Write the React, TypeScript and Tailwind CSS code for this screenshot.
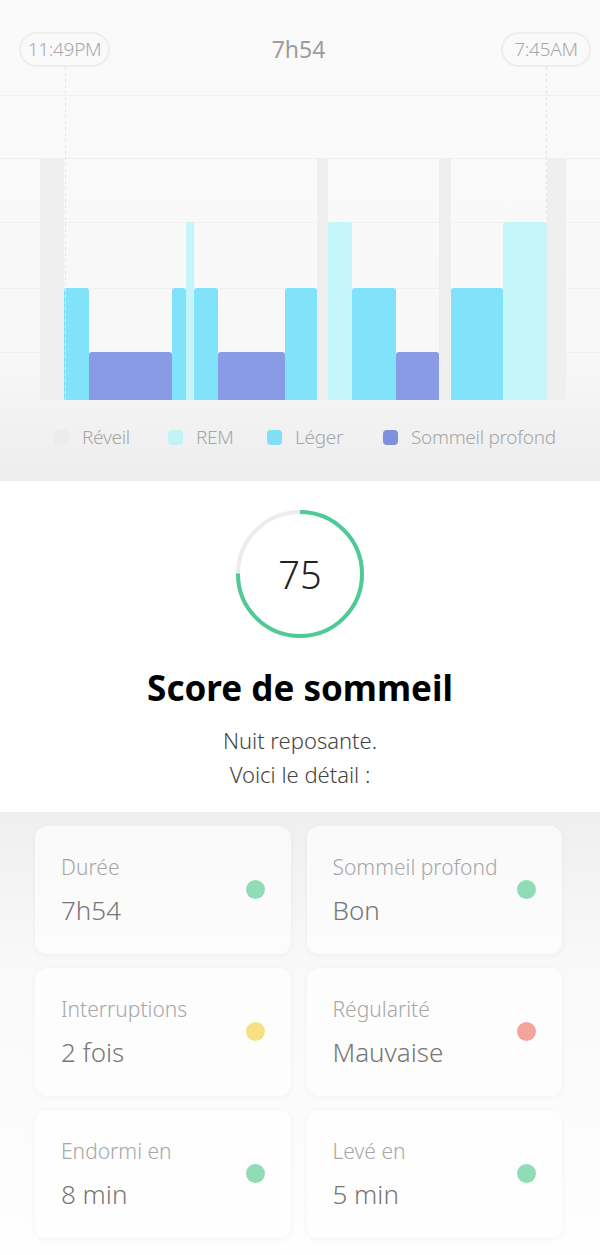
import React from "react"

// sleep stages, x positions in px across the 600px chart
type Stage = "wake" | "rem" | "light" | "deep"

const stageTop: Record<Stage, number> = { wake: 91, rem: 155, light: 221, deep: 285 }
const stageColor: Record<Stage, string> = {
  wake: "#efefef",
  rem: "#c4f6f9",
  light: "#80e3f9",
  deep: "#8a9be6",
}

const segments: { x0: number; x1: number; s: Stage }[] = [
  { x0: 40, x1: 64, s: "wake" },
  { x0: 64, x1: 89, s: "light" },
  { x0: 89, x1: 172, s: "deep" },
  { x0: 172, x1: 186, s: "light" },
  { x0: 186, x1: 194, s: "rem" },
  { x0: 194, x1: 218, s: "light" },
  { x0: 218, x1: 285, s: "deep" },
  { x0: 285, x1: 317, s: "light" },
  { x0: 317, x1: 328, s: "wake" },
  { x0: 328, x1: 352, s: "rem" },
  { x0: 352, x1: 396, s: "light" },
  { x0: 396, x1: 439, s: "deep" },
  { x0: 439, x1: 451, s: "wake" },
  { x0: 451, x1: 503, s: "light" },
  { x0: 503, x1: 547, s: "rem" },
  { x0: 547, x1: 566, s: "wake" },
]

const BOTTOM = 333

function barPath(x0: number, x1: number, top: number, r: number) {
  const rr = Math.min(r, (x1 - x0) / 2)
  return `M${x0},${BOTTOM} V${top + rr} Q${x0},${top} ${x0 + rr},${top} H${x1 - rr} Q${x1},${top} ${x1},${top + rr} V${BOTTOM} Z`
}

const legend = [
  { label: "Réveil", color: "#ececec", w: "w-[114px]" },
  { label: "REM", color: "#c2f4f7", w: "w-[99px]" },
  { label: "Léger", color: "#7fdff7", w: "w-[116px]" },
  { label: "Sommeil profond", color: "#7f90df", w: "" },
]

const details = [
  { label: "Durée", value: "7h54", dot: "#8fdcb5" },
  { label: "Sommeil profond", value: "Bon", dot: "#8fdcb5" },
  { label: "Interruptions", value: "2 fois", dot: "#f8e184" },
  { label: "Régularité", value: "Mauvaise", dot: "#f3a49b" },
  { label: "Endormi en", value: "8 min", dot: "#8fdcb5" },
  { label: "Levé en", value: "5 min", dot: "#8fdcb5" },
]

function SleepChart() {
  return (
    <svg width="600" height="335" viewBox="0 0 600 335" className="block">
      {[28, 91, 155, 221, 285].map((y) => (
        <line key={y} x1="0" x2="600" y1={y + 0.5} y2={y + 0.5} stroke="#f0f0f0" strokeWidth="1" />
      ))}
      {segments.map((seg, i) => (
        <path key={i} d={barPath(seg.x0, seg.x1, stageTop[seg.s], seg.s === "wake" ? 0 : 3)} fill={stageColor[seg.s]} />
      ))}
      <line x1="65.5" x2="65.5" y1="0" y2={BOTTOM} stroke="#e6e6e6" strokeWidth="1" strokeDasharray="3 3" />
      <line x1="546.5" x2="546.5" y1="0" y2={BOTTOM} stroke="#e6e6e6" strokeWidth="1" strokeDasharray="3 3" />
    </svg>
  )
}

function ScoreRing({ score }: { score: number }) {
  const r = 62
  const circ = 2 * Math.PI * r
  return (
    <div className="relative w-[132px] h-[132px]">
      <svg width="132" height="132" viewBox="0 0 132 132" className="-rotate-90">
        <circle cx="66" cy="66" r={r} fill="none" stroke="#ececec" strokeWidth="4" />
        <circle
          cx="66"
          cy="66"
          r={r}
          fill="none"
          stroke="#4fca96"
          strokeWidth="4"
          strokeDasharray={circ}
          strokeDashoffset={circ * (1 - score / 100)}
        />
      </svg>
      <div className="absolute inset-0 flex items-center justify-center text-[38px] font-light text-[#222]">
        {score}
      </div>
    </div>
  )
}

export default function App() {
  return (
    <div className="w-[600px] min-h-[1255px] bg-white font-['Noto_Sans',sans-serif]">
      {/* chart section */}
      <div className="bg-[linear-gradient(to_bottom,#fafafa_0%,#f8f8f8_72%,#ededed_100%)] pb-[32px]">
        <div className="flex items-center justify-between pl-[19px] pr-[9px] pt-[32px]">
          <div className="h-[35px] w-[91px] rounded-full border-2 border-[#eeeeee] flex items-center justify-center text-[19px] font-light text-[#a9a9a9] tracking-[-0.3px]">
            11:49PM
          </div>
          <div className="flex-1 text-center mr-[14px] text-[23px] text-[#9d9d9d]">7h54</div>
          <div className="h-[35px] w-[90px] rounded-full border-2 border-[#eeeeee] flex items-center justify-center text-[19px] font-light text-[#a9a9a9] tracking-[-0.3px]">
            7:45AM
          </div>
        </div>
        <SleepChart />
        <div className="mt-[23px] flex items-center pl-[54px] h-[24px]">
          {legend.map((l) => (
            <div key={l.label} className={`flex items-center ${l.w}`}>
              <span className="w-[15px] h-[15px] rounded-[4px]" style={{ backgroundColor: l.color }} />
              <span className="ml-[13px] text-[19px] font-light text-[#a6a6a6] tracking-[-0.3px]">{l.label}</span>
            </div>
          ))}
        </div>
      </div>

      {/* score section */}
      <div className="bg-white flex flex-col items-center pt-[27px] pb-[21px]">
        <ScoreRing score={75} />
        <h1 className="mt-[26px] text-[35px] leading-[44px] font-bold text-black">Score de sommeil</h1>
        <p className="mt-[13px] text-[22px] leading-[34px] font-light text-[#444] text-center">
          Nuit reposante.
          <br />
          Voici le détail :
        </p>
      </div>

      {/* detail cards */}
      <div className="bg-[linear-gradient(to_bottom,#efefef_0%,#f9f9f9_35%,#fefefe_100%)] pl-[35px] pr-[38px] pt-[14px] pb-[17px]">
        <div className="grid grid-cols-2 gap-x-[16px] gap-y-[14px]">
          {details.map((d) => (
            <div
              key={d.label}
              className="h-[128px] rounded-[12px] bg-white/60 shadow-[0_1px_6px_rgba(0,0,0,0.045)] flex items-center justify-between pl-[26px] pr-[26px]"
            >
              <div className="flex flex-col">
                <span className="text-[21px] leading-[26px] text-[#a7a7a7] font-light">{d.label}</span>
                <span className="mt-[13px] text-[26px] leading-[34px] text-[#777] font-light">{d.value}</span>
              </div>
              <span className="w-[19px] h-[19px] rounded-full mb-[1px]" style={{ backgroundColor: d.dot }} />
            </div>
          ))}
        </div>
      </div>
    </div>
  )
}
